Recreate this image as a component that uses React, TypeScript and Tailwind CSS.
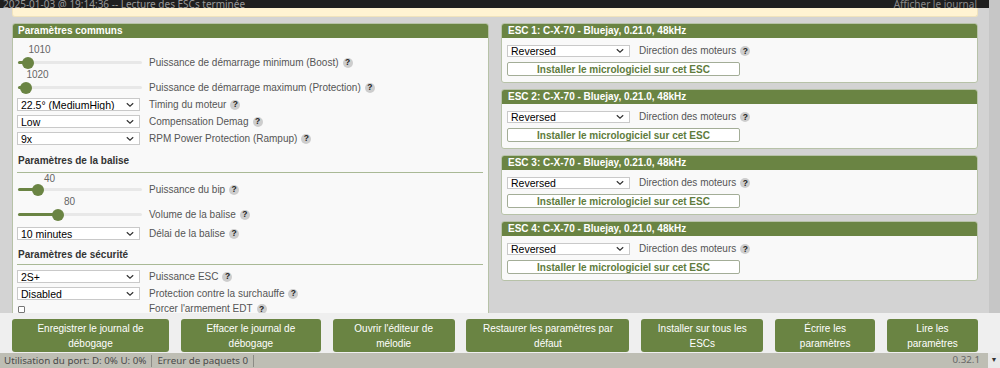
import React from "react";

const Help = () => (
  <span className="inline-flex items-center justify-center w-[10px] h-[10px] rounded-full bg-[#cdcdcd] text-[8.5px] font-bold text-[#1f1f1f] leading-none ml-[4px]">
    ?
  </span>
);

const Label = ({ children }: { children: React.ReactNode }) => (
  <span className="flex items-center text-[10px] leading-[12px] text-[#555] whitespace-nowrap">
    {children}
    <Help />
  </span>
);

const Chevron = () => (
  <svg className="absolute right-[5px] top-1/2 -translate-y-1/2" width="8" height="5" viewBox="0 0 8 5">
    <polyline points="0.8,0.8 4,3.8 7.2,0.8" fill="none" stroke="#333" strokeWidth="1.2" />
  </svg>
);

const Select = ({ value, small = false }: { value: string; small?: boolean }) => (
  <div className={`relative w-[123px] ${small ? "h-[12px]" : "h-[13px]"} bg-white border border-[#c9c9c9] overflow-hidden shrink-0`}>
    <span className={`block pl-[3px] ${small ? "pt-0" : "pt-[1px]"} text-[10.5px] leading-[11px] text-black whitespace-nowrap`}>
      {value}
    </span>
    <Chevron />
  </div>
);

const SelectRow = ({ value, label, cls = "" }: { value: string; label: string; cls?: string }) => (
  <div className={`flex items-center gap-[9px] ${cls}`}>
    <Select value={value} />
    <Label>{label}</Label>
  </div>
);

// thumb = x of the thumb centre on the page
const Slider = ({ value, thumb, label, top = "h-[12px]" }: { value: string; thumb: number; label: string; top?: string }) => {
  const x = thumb - 17;
  return (
    <div>
      <div className={`relative ${top} w-[124px] ml-[1px]`}>
        <span
          className="absolute top-0 -translate-x-1/2 text-[10px] leading-[11px] text-[#666]"
          style={{ left: x + 11.5 }}
        >
          {value}
        </span>
      </div>
      <div className="flex items-center h-[13px]">
        <div className="relative w-[124px] h-[13px] ml-[1px] shrink-0">
          <div className="absolute left-0 right-0 top-[5px] h-[3px] rounded-full bg-[#e8e8e8]" />
          <div className="absolute left-0 top-[5px] h-[3px] rounded-full bg-[#6a8443]" style={{ width: x }} />
          <div className="absolute top-[0.5px] w-[12px] h-[12px] rounded-full bg-[#6a8443]" style={{ left: x - 6 }} />
        </div>
        <div className="ml-[7px]">
          <Label>{label}</Label>
        </div>
      </div>
    </div>
  );
};

const SectionTitle = ({ children, cls }: { children: React.ReactNode; cls: string }) => (
  <div className={`border-b border-[#a9b996] text-[10px] leading-[14px] font-bold text-[#333] pl-[1px] ${cls}`}>
    {children}
  </div>
);

const EscCard = ({ n }: { n: number }) => (
  <div className="border border-[#b7c2a8] rounded-[3px] bg-[#f9f9f9] overflow-hidden">
    <div className="h-[14px] bg-[#6a8443] text-white text-[10px] font-bold leading-[14px] pl-[6px]">
      ESC {n}: C-X-70 - Bluejay, 0.21.0, 48kHz
    </div>
    <div className="pl-[5px] pt-[7px] pb-[6px]">
      <div className="flex items-center gap-[9px]">
        <Select value="Reversed" small />
        <Label>Direction des moteurs</Label>
      </div>
      <div className="mt-[5px] w-[233px] h-[14px] border border-[#a3ad97] rounded-[2px] bg-white flex items-center justify-center text-[10px] font-bold text-[#5e7b3c]">
        Installer le micrologiciel sur cet ESC
      </div>
    </div>
  </div>
);

const buttons: { w: string; l1: string; l2: string }[] = [
  { w: "w-[157px]", l1: "Enregistrer le journal de", l2: "débogage" },
  { w: "w-[140px]", l1: "Effacer le journal de", l2: "débogage" },
  { w: "w-[122px]", l1: "Ouvrir l'éditeur de", l2: "mélodie" },
  { w: "w-[163px]", l1: "Restaurer les paramètres par", l2: "défaut" },
  { w: "w-[122px]", l1: "Installer sur tous les", l2: "ESCs" },
  { w: "w-[100px]", l1: "Écrire les", l2: "paramètres" },
  { w: "w-[91px]", l1: "Lire les", l2: "paramètres" },
];

export default function App() {
  return (
    <div className="w-[1000px] h-[368px] overflow-hidden flex flex-col bg-[#d3d3d3] font-['Liberation_Sans',Arial,sans-serif]">
      <div className="flex h-[313px] shrink-0 overflow-hidden">
        <div className="flex-1 flex flex-col overflow-hidden">
          <div className="h-[8px] shrink-0 bg-[#1f1f1f] overflow-hidden flex justify-between pl-[3px] pr-[12px] font-['Noto_Sans',sans-serif] text-[10px] leading-[10px] text-[#9a9a9a]">
            <span className="-mt-[1px]">2025-01-03 @ 19:14:36 -- Lecture des ESCs terminée</span>
            <span className="-mt-[1px] text-[#8a8a8a]">Afficher le journal</span>
          </div>
          <div className="pl-[12px] pr-[11px] shrink-0">
            <div className="h-[9px] bg-[#fff3d2] rounded-b-[3px] border-x border-b border-[#f0e3bd]" />
          </div>
          <div className="flex gap-[12px] pl-[12px] pr-[11px] pt-[6px]">
            {/* left panel */}
            <div className="w-[477px] shrink-0 self-start border border-[#b7c2a8] rounded-[3px] bg-[#f9f9f9] overflow-hidden">
              <div className="h-[14px] bg-[#6a8443] text-white text-[10px] font-bold leading-[14px] pl-[5px]">
                Paramètres communs
              </div>
              <div className="pl-[4px] pr-[5px] pt-[6px] pb-[20px]">
                <Slider value="1010" thumb={27} label="Puissance de démarrage minimum (Boost)" />
                <Slider value="1020" thumb={25} label="Puissance de démarrage maximum (Protection)" />
                <SelectRow cls="mt-[4px]" value="22.5° (MediumHigh)" label="Timing du moteur" />
                <SelectRow cls="mt-[4px]" value="Low" label="Compensation Demag" />
                <SelectRow cls="mt-[4px]" value="9x" label="RPM Power Protection (Rampup)" />

                <SectionTitle cls="mt-[9px] pb-[4px]">Paramètres de la balise</SectionTitle>
                <Slider value="40" thumb={37} top="h-[10px]" label="Puissance du bip" />
                <Slider value="80" thumb={57} label="Volume de la balise" />
                <SelectRow cls="mt-[6px]" value="10 minutes" label="Délai de la balise" />

                <SectionTitle cls="mt-[8px] pb-[2px]">Paramètres de sécurité</SectionTitle>
                <SelectRow cls="mt-[5px]" value="2S+" label="Puissance ESC" />
                <SelectRow cls="mt-[4px]" value="Disabled" label="Protection contre la surchauffe" />
                <div className="flex items-center h-[12px] mt-[3px]">
                  <div className="w-[123px] shrink-0 pl-[1px]">
                    <div className="w-[7px] h-[7px] border border-[#777] rounded-[1px] bg-white" />
                  </div>
                  <div className="ml-[9px]">
                    <Label>Forcer l'armement EDT</Label>
                  </div>
                </div>
              </div>
            </div>

            {/* right column */}
            <div className="flex-1 flex flex-col gap-[6px]">
              {[1, 2, 3, 4].map((n) => (
                <EscCard key={n} n={n} />
              ))}
            </div>
          </div>
        </div>
        <div className="w-[11px] shrink-0 bg-[#c6c6c6]" />
      </div>

      <div className="h-[40px] shrink-0 bg-[#efefef] flex justify-between items-start pt-[6px] pl-[12px] pr-[22px]">
        {buttons.map((b) => (
          <div
            key={b.l1}
            className={`${b.w} h-[33px] rounded-[3px] bg-[#6a8443] text-white text-[10px] leading-[15px] flex flex-col items-center justify-center text-center`}
          >
            <span>{b.l1}</span>
            <span>{b.l2}</span>
          </div>
        ))}
      </div>

      <div className="h-[15px] shrink-0 bg-[#bebeb4] flex items-center font-['Noto_Sans',sans-serif] text-[9.75px] text-[#4a4a4a]">
        <span className="pl-[4px] pr-[5px] border-r border-[#8c8c86] leading-[12px]">Utilisation du port: D: 0% U: 0%</span>
        <span className="pl-[5px] pr-[5px] border-r border-[#8c8c86] leading-[12px]">Erreur de paquets 0</span>
        <span className="ml-auto pr-[8px] text-[#666]">0.32.1</span>
        <span className="w-[12px] h-[15px] bg-[#e9e9e9] flex items-center justify-center text-[7px] text-[#333]">▼</span>
      </div>
    </div>
  );
}
